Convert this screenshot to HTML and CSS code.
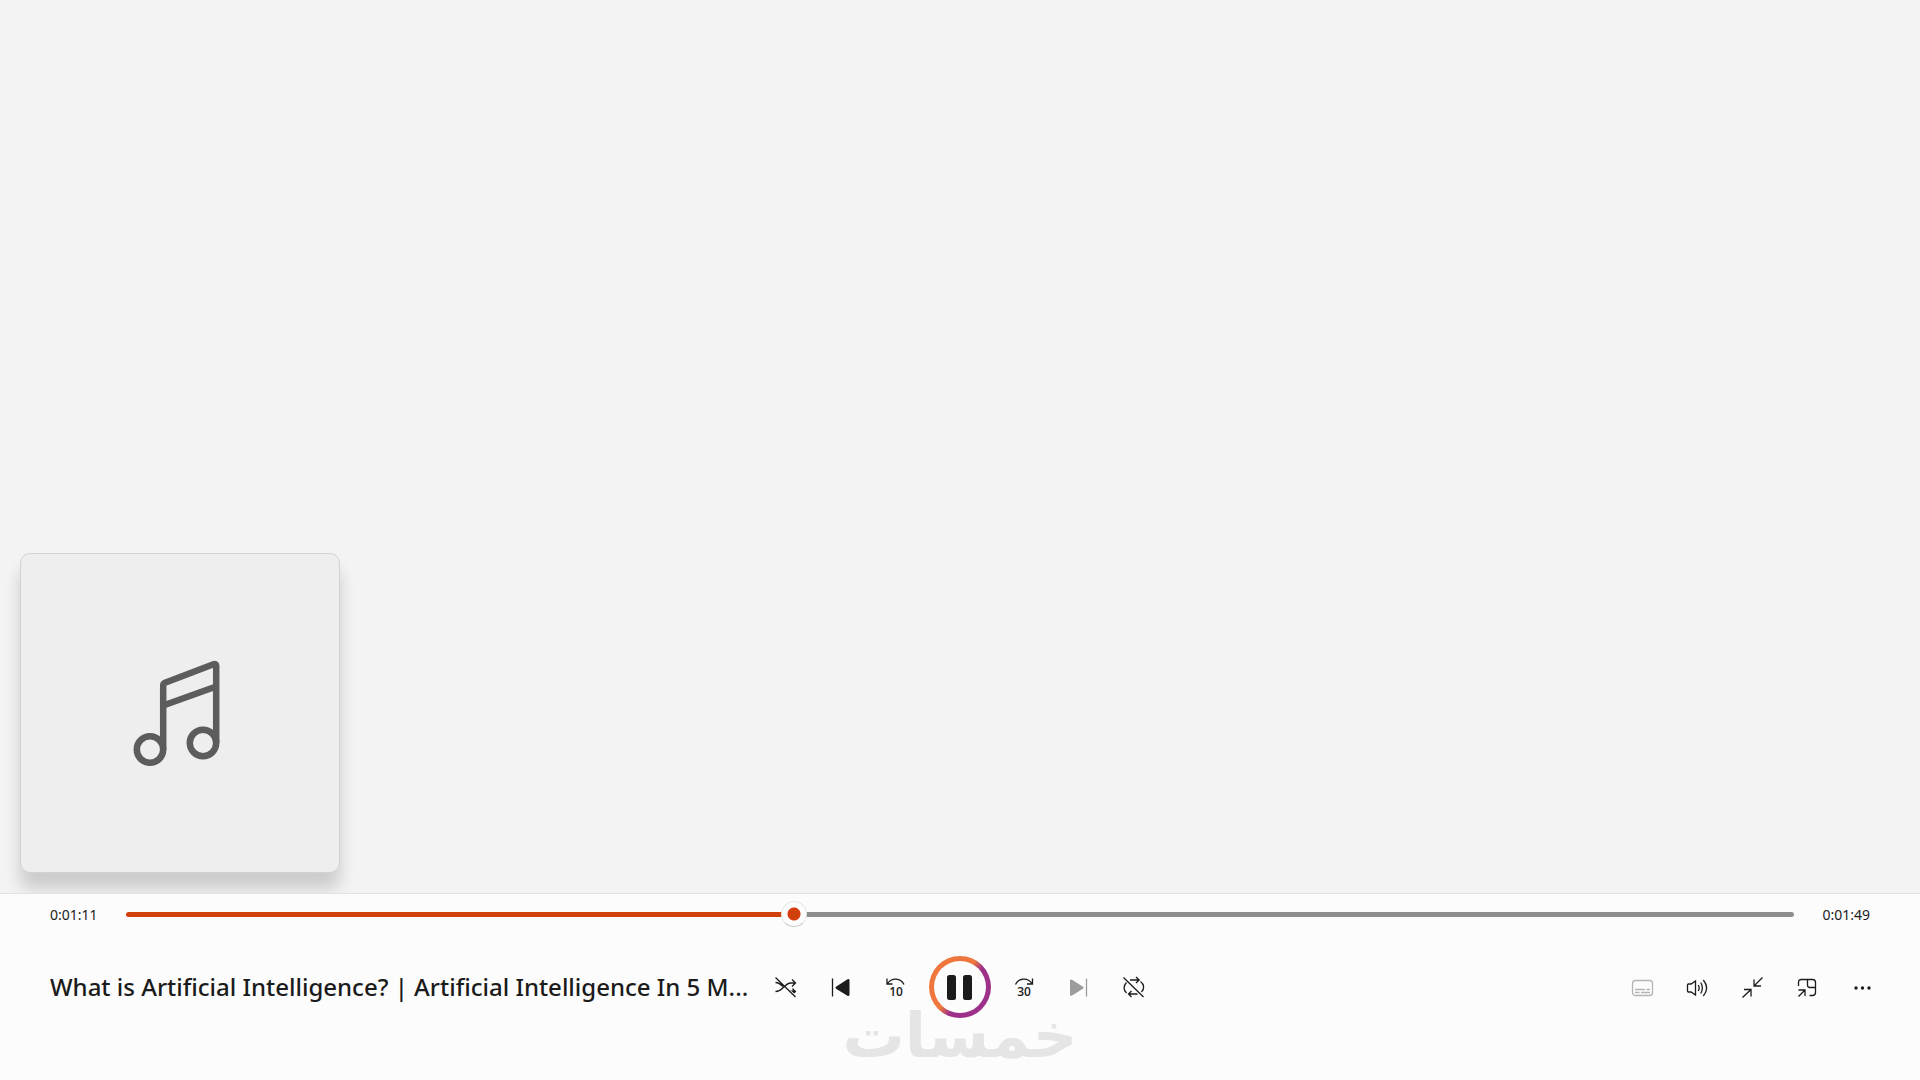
FILE: index.html
```html
<!DOCTYPE html>
<html lang="en">
<head>
<meta charset="utf-8">
<title>Media Player</title>
<link rel="stylesheet" href="styles.css">
</head>
<body>
<div class="player">
  <main class="stage">
    <div class="artwork">
      <svg class="artwork-icon" viewBox="0 0 120 120" aria-hidden="true">
        <circle cx="30" cy="96.500" r="13.200"/>
        <circle cx="83" cy="90" r="13.200"/>
        <path d="M43.200 96.500V32.500Q43.200 30.500 45 29.800L93.500 11.300Q96.200 10.300 96.200 12.500V90M43.200 52.500L96.200 33.500"/>
      </svg>
    </div>
  </main>
  <footer class="bar">
    <div class="seek">
      <label class="time" for="seek">0:01:11</label>
      <input class="seek-range" id="seek" type="range" min="0" max="1800" value="718" aria-label="Seek">
      <span class="time time-end">0:01:49</span>
    </div>
    <div class="controls">
      <h1 class="title">What is Artificial Intelligence? | Artificial Intelligence In 5 M...</h1>
      <div class="transport">
        <button class="btn" type="button" aria-label="Shuffle off">
          <svg class="icon" viewBox="0 0 24 24"><path d="M1.500 2.500L21.500 22M1.500 7.500C4.500 7.500 6.500 9 9 11.500M1.500 16.500C9.500 16.500 10 8 17 8H21M18 4.500L21.500 8L18 11.500"/><path class="solid" d="M18.500 12.800L22.300 16.500L20.300 18.500L15.500 14.500L18.500 16Z"/></svg>
        </button>
        <button class="btn" type="button" aria-label="Previous">
          <svg class="icon" viewBox="0 0 24 24"><path d="M3.500 3.500V21.500"/><path class="solid" d="M7 11.700L18.500 4.300Q20.500 3.500 20.500 5.500V19.500Q20.500 21.500 18.500 20.700L7 13.700Q5.800 12.700 7 11.700Z"/></svg>
        </button>
        <button class="btn" type="button" aria-label="Skip back 10 seconds">
          <svg class="icon" viewBox="0 0 24 24"><path d="M3 3.500V9H8.500M3.500 8.500C7.500 2.500 16.500 2.500 20 9.500"/><text class="skip" x="12" y="21">10</text></svg>
        </button>
        <button class="play" type="button" aria-label="Pause">
          <svg class="play-icon" viewBox="0 0 32 32"><rect x="3" y="4" width="9" height="25" rx="2.500"/><rect x="19" y="4" width="9" height="25" rx="2.500"/></svg>
        </button>
        <button class="btn" type="button" aria-label="Skip forward 30 seconds">
          <svg class="icon" viewBox="0 0 24 24"><path d="M20.500 3.500V9H15M20 8.500C16 2.500 7 2.500 3.500 9.500"/><text class="skip" x="12" y="21">30</text></svg>
        </button>
        <button class="btn btn-dim" type="button" aria-label="Next">
          <svg class="icon" viewBox="0 0 24 24"><path d="M19.500 3.500V21.500"/><path class="solid" d="M3 6Q3 4 5 4.800L16 11.700Q17.500 12.700 16 13.700L5 20.500Q3 21.500 3 19.500Z"/></svg>
        </button>
        <button class="btn" type="button" aria-label="Repeat off">
          <svg class="icon" viewBox="0 0 24 24"><path d="M1.500 2.500L21.500 22M8 5H16.500M14 2L17.200 5L14 8M4.500 7.500C1 11 1.500 15.500 4.500 18M15.500 19H7M9.500 16L6.500 19L9.500 22M18.500 6.500C22.500 9.500 22.500 14 19.500 17"/></svg>
        </button>
      </div>
      <div class="options">
        <button class="btn btn-faint" type="button" aria-label="Captions">
          <svg class="icon" viewBox="0 0 24 24"><rect x="2.500" y="5.500" width="20" height="15" rx="3"/><path d="M5 14.500H15M16.500 14.500H20M5 17.500H9.500M11 17.500H20"/></svg>
        </button>
        <button class="btn" type="button" aria-label="Volume">
          <svg class="icon" viewBox="0 0 24 24"><path d="M2.500 10Q2.500 9 3.500 9H6L10.500 6V20L6 17H3.500Q2.500 17 2.500 16ZM13.300 10Q15 13 13.300 16M15.700 7.500Q19 13 15.700 18.500M18.300 5Q25 13 18.300 21"/></svg>
        </button>
        <button class="btn" type="button" aria-label="Exit full screen">
          <svg class="icon" viewBox="0 0 24 24"><path d="M22.500 2.500L14 11M14 4.500V11H21M2.500 22.500L11 14.500M4 14.500H11V21.500"/></svg>
        </button>
        <button class="btn" type="button" aria-label="Mini player">
          <svg class="icon" viewBox="0 0 24 24"><path d="M3.500 11V7.500Q3.500 4.500 6.500 4.500H17.500Q20.500 4.500 20.500 7.500V17.500Q20.500 20.500 17.500 20.500H14.500M12.500 4.500V10Q12.500 12.500 15 12.500H20.500M3.500 21.500L10 15M3.500 15H10V21"/></svg>
        </button>
        <button class="btn" type="button" aria-label="More options">
          <svg class="icon" viewBox="0 0 24 24"><g class="solid"><circle cx="6" cy="13" r="1.700"/><circle cx="12.500" cy="13" r="1.700"/><circle cx="19" cy="13" r="1.700"/></g></svg>
        </button>
      </div>
    </div>
    <div class="watermark" lang="ar" dir="rtl">خمسات</div>
  </footer>
</div>
</body>
</html>
```
FILE: styles.css
```css
* { box-sizing: border-box; }

body {
  margin: 0;
  background: #f3f3f3;
  color: #1b1b1b;
  font-family: "Noto Sans", "Open Sans", sans-serif;
}

.player {
  display: flex;
  flex-direction: column;
  min-height: 100vh;
}

.stage {
  flex: 1;
  display: flex;
  align-items: flex-end;
  padding: 20px;
}

.artwork {
  display: flex;
  align-items: center;
  justify-content: center;
  width: 320px;
  height: 320px;
  background: #eeeeee;
  border: 1px solid #d2d2d2;
  border-radius: 10px;
  box-shadow: 0 16px 16px rgba(0, 0, 0, 0.16);
}

.artwork-icon {
  width: 120px;
  height: 120px;
  fill: none;
  stroke: #5c5c5c;
  stroke-width: 6.5;
}

.bar {
  position: relative;
  height: 187px;
  background: #fcfcfc;
  border-top: 1px solid #e2e2e2;
}

.seek {
  display: flex;
  align-items: center;
  height: 41px;
  padding: 0 50px;
}

.time {
  flex: none;
  width: 76px;
  font-size: 14px;
  line-height: 20px;
}

.time-end { text-align: right; }

.seek-range {
  flex: 1;
  min-width: 0;
  height: 28px;
  margin: 0;
  background: none;
  appearance: none;
}

.seek-range::-webkit-slider-runnable-track {
  height: 5px;
  border-radius: 3px;
  background: linear-gradient(90deg, #d13f0b 40%, #8d8d8d 40%);
}

.seek-range::-webkit-slider-thumb {
  appearance: none;
  width: 26px;
  height: 26px;
  margin-top: -11px;
  border: 1px solid #e8e8e8;
  border-bottom-color: #c8c8c8;
  border-radius: 50%;
  background: radial-gradient(circle, #d13f0b 6px, #fdfdfd 7px);
}

.controls {
  display: grid;
  grid-template-columns: 1fr auto 1fr;
  align-items: center;
  height: 64px;
  margin-top: 20px;
  padding: 0 33px;
}

.title {
  min-width: 0;
  margin: 0;
  padding-left: 17px;
  overflow: hidden;
  font-size: 24px;
  font-weight: 500;
  line-height: 34px;
  white-space: nowrap;
}

.transport,
.options {
  display: flex;
  align-items: center;
  gap: 5px;
}

.options { justify-content: flex-end; }

.btn {
  display: flex;
  align-items: center;
  justify-content: center;
  width: 50px;
  height: 50px;
  padding: 0;
  border: 0;
  background: none;
  color: #1b1b1b;
}

.btn-dim { color: #9c9c9c; }

.btn-faint { color: #b4b4b4; }

.icon {
  width: 24px;
  height: 24px;
  fill: none;
  stroke: currentColor;
  stroke-width: 1.3;
}

.icon .solid {
  fill: currentColor;
  stroke: none;
}

.skip {
  fill: currentColor;
  stroke: none;
  font-family: "Open Sans", sans-serif;
  font-size: 12px;
  font-weight: 600;
  text-anchor: middle;
}

.play {
  position: relative;
  z-index: 1;
  display: flex;
  align-items: center;
  justify-content: center;
  width: 62px;
  height: 62px;
  margin: 0 3px;
  padding: 0;
  border: 5px solid transparent;
  border-radius: 50%;
  background:
    linear-gradient(#fcfcfc, #fcfcfc) padding-box,
    linear-gradient(126deg, #ef763c 46%, #9d3189 58%) border-box;
}

.play-icon {
  flex: none;
  width: 32px;
  height: 32px;
  fill: #1b1b1b;
}

.watermark {
  position: absolute;
  right: 0;
  bottom: 8px;
  left: 0;
  color: #e5e5e5;
  font-family: "DejaVu Sans", sans-serif;
  font-size: 62px;
  font-weight: 700;
  line-height: 72px;
  text-align: center;
  pointer-events: none;
}
```
